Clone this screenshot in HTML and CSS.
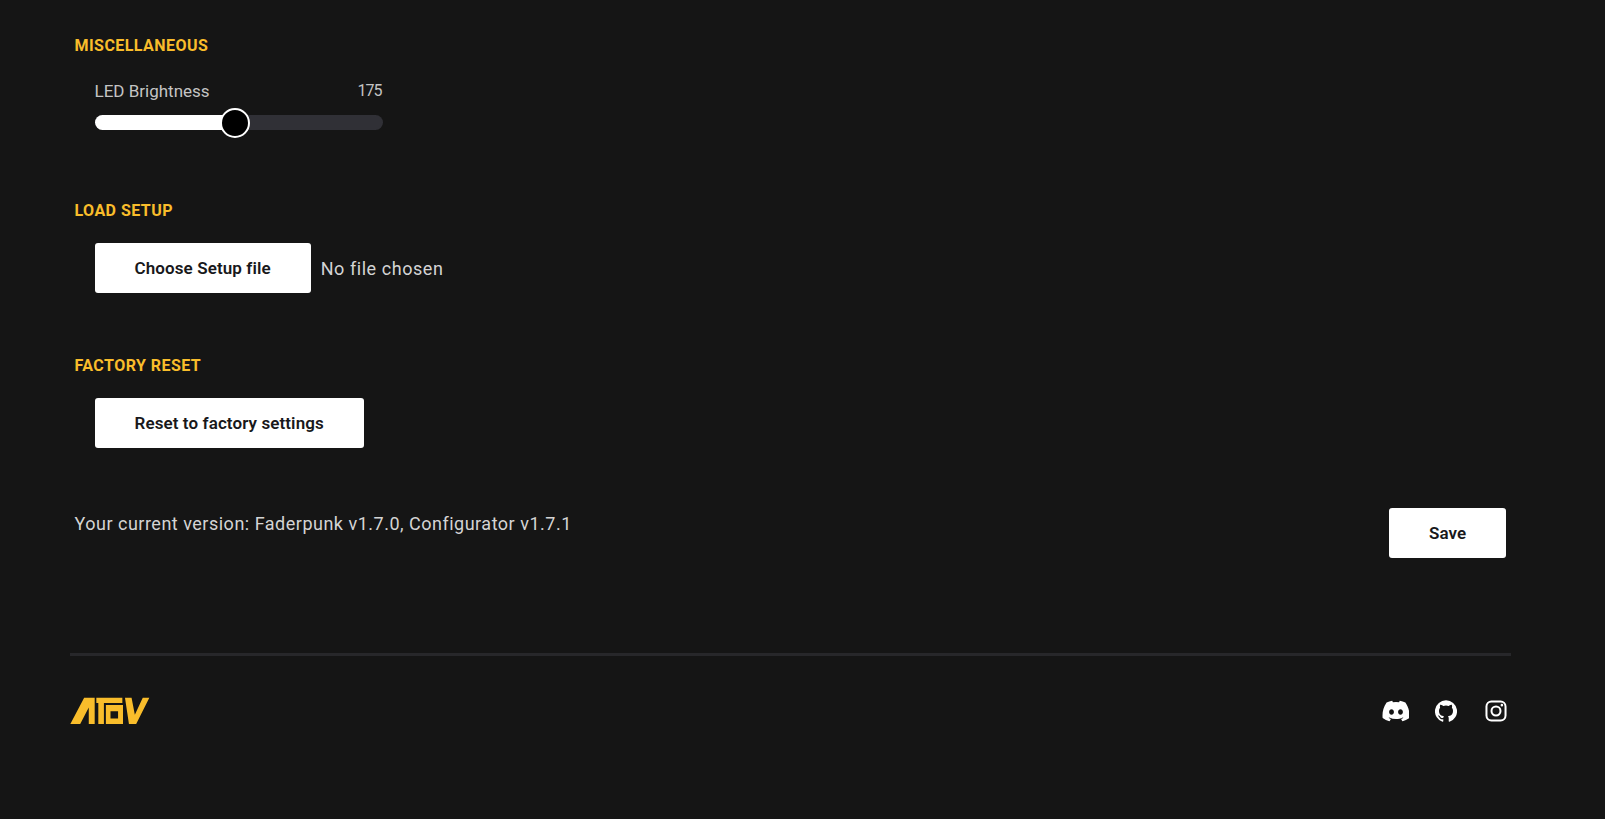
FILE: index.html
```html
<!DOCTYPE html>
<html lang="en">
<head>
<meta charset="utf-8">
<title>Faderpunk Configurator</title>
<link rel="stylesheet" href="styles.css">
</head>
<body>
<div class="page">
  <main class="settings">
    <section class="group group-misc">
      <h2 class="group-title">MISCELLANEOUS</h2>
      <div class="group-body">
        <div class="slider">
          <div class="slider-head"><span>LED Brightness</span><span class="slider-value">175</span></div>
          <div class="slider-track">
            <div class="slider-fill"></div>
            <div class="slider-thumb"></div>
          </div>
        </div>
      </div>
    </section>
    <section class="group group-load">
      <h2 class="group-title">LOAD SETUP</h2>
      <div class="group-body file-row">
        <button class="btn">Choose Setup file</button>
        <span class="file-name">No file chosen</span>
      </div>
    </section>
    <section class="group group-reset">
      <h2 class="group-title">FACTORY RESET</h2>
      <div class="group-body">
        <button class="btn">Reset to factory settings</button>
      </div>
    </section>
    <div class="version-row">
      <p class="version">Your current version: Faderpunk v1.7.0, Configurator v1.7.1</p>
      <button class="btn btn-save">Save</button>
    </div>
  </main>
  <footer class="footer">
    <svg class="logo" viewBox="27 51 243 83" aria-label="ATOV">
      <g fill="#f9bd2b">
        <path d="M28 132 L70 52 H102 V132 H84 V82 L58 132 Z"/>
        <path d="M107 52 H186 V68 H130 V132 H113 V68 H107 Z"/>
        <path fill-rule="evenodd" d="M136 74 H188 V132 H136 Z M150 93 V115 H173 V93 Z"/>
        <path d="M194 52 H214 L224 104 L248 52 H268 L228 132 H206 Z"/>
      </g>
    </svg>
    <div class="socials">
      <svg class="icon icon-discord" viewBox="0 0 24 24"><path fill="#fff" d="M20.32 4.37a19.8 19.8 0 0 0-4.89-1.52.07.07 0 0 0-.08.04c-.21.38-.44.87-.61 1.25a18.3 18.3 0 0 0-5.49 0 12.6 12.6 0 0 0-.62-1.25.08.08 0 0 0-.08-.04 19.7 19.7 0 0 0-4.89 1.52.07.07 0 0 0-.03.03C.53 9.05-.32 13.58.1 18.06c0 .02.01.04.03.06a19.9 19.9 0 0 0 6 3.03.08.08 0 0 0 .08-.03c.46-.63.87-1.29 1.23-1.99a.08.08 0 0 0-.04-.11 13.1 13.1 0 0 1-1.87-.89.08.08 0 0 1-.01-.13c.13-.09.25-.19.37-.29a.07.07 0 0 1 .08-.01c3.93 1.79 8.18 1.79 12.06 0a.07.07 0 0 1 .08.01c.12.1.25.2.37.29a.08.08 0 0 1-.01.13c-.6.35-1.22.64-1.87.89a.08.08 0 0 0-.04.11c.36.7.77 1.36 1.22 1.99a.08.08 0 0 0 .08.03 19.8 19.8 0 0 0 6-3.03.08.08 0 0 0 .03-.06c.5-5.18-.84-9.67-3.55-13.66a.06.06 0 0 0-.03-.03zM8.02 15.33c-1.18 0-2.16-1.08-2.16-2.42 0-1.33.96-2.42 2.16-2.42 1.21 0 2.18 1.1 2.16 2.42 0 1.34-.96 2.42-2.16 2.42zm7.97 0c-1.18 0-2.15-1.08-2.15-2.42 0-1.33.95-2.42 2.15-2.42 1.21 0 2.18 1.1 2.16 2.42 0 1.34-.95 2.42-2.16 2.42z"/></svg>
      <svg class="icon icon-github" viewBox="0 0 24 24"><path fill="#fff" d="M12 .3a12 12 0 0 0-3.79 23.4c.6.11.82-.26.82-.58v-2.03c-3.34.72-4.04-1.61-4.04-1.61-.55-1.39-1.34-1.76-1.34-1.76-1.09-.74.08-.73.08-.73 1.21.09 1.84 1.24 1.84 1.24 1.07 1.84 2.81 1.31 3.5 1 .11-.78.42-1.31.76-1.61-2.67-.3-5.47-1.33-5.47-5.93 0-1.31.47-2.38 1.24-3.22-.14-.3-.54-1.52.1-3.18 0 0 1.01-.32 3.3 1.23a11.5 11.5 0 0 1 6 0c2.28-1.55 3.29-1.23 3.29-1.23.64 1.66.24 2.88.12 3.18a4.65 4.65 0 0 1 1.23 3.22c0 4.61-2.8 5.63-5.48 5.92.42.36.81 1.1.81 2.22v3.29c0 .32.22.7.82.58A12 12 0 0 0 12 .3z"/></svg>
      <svg class="icon icon-instagram" viewBox="0 0 24 24"><path fill="#fff" fill-rule="evenodd" d="M7 .5h10A6.500 6.500 0 0 1 23.500 7v10a6.500 6.500 0 0 1-6.500 6.500H7A6.500 6.500 0 0 1 .5 17V7A6.500 6.500 0 0 1 7 .5zm0 2.200A4.300 4.300 0 0 0 2.700 7v10A4.300 4.300 0 0 0 7 21.300h10a4.300 4.300 0 0 0 4.300-4.300V7A4.300 4.300 0 0 0 17 2.700H7zm5 3.300a6 6 0 1 1 0 12 6 6 0 0 1 0-12zm0 2.200a3.800 3.800 0 1 0 0 7.600 3.800 3.800 0 0 0 0-7.600zM18.400 4.200a1.400 1.400 0 1 1 0 2.800 1.400 1.400 0 0 1 0-2.800z"/></svg>
    </div>
  </footer>
</div>
</body>
</html>
```
FILE: styles.css
```css
* { box-sizing: border-box; }
html, body { margin: 0; height: 100%; }
body {
  background: #151515;
  color: #d4d4d4;
  font-family: Roboto, "Liberation Sans", sans-serif;
  overflow: hidden;
}
.page { padding: 0 94px 0 70px; }
.settings { padding: 36px 5px 0 4.5px; }
.group-title {
  margin: 0;
  font-size: 16px;
  line-height: 20px;
  font-weight: 700;
  letter-spacing: .45px;
  color: #f9bd2b;
}
.group-body { padding-left: 20px; }
.group-misc { height: 165px; }
.group-misc .group-body { padding-top: 25px; }
.group-load { height: 155px; }
.group-load .group-body { padding-top: 22px; }
.group-reset { height: 152px; }
.group-reset .group-body { padding-top: 22px; }
.slider { width: 288px; }
.slider-head {
  display: flex;
  justify-content: space-between;
  font-size: 17px;
  line-height: 20px;
  color: #c4c4c4;
}
.slider-value { font-size: 16px; letter-spacing: -1px; margin-right: 1px; }
.slider-track {
  position: relative;
  height: 15px;
  margin-top: 14px;
  border-radius: 8px;
  background: #303036;
}
.slider-fill {
  height: 100%;
  width: 140px;
  border-radius: 8px 0 0 8px;
  background: #fff;
}
.slider-thumb {
  position: absolute;
  left: 125px;
  top: -7px;
  width: 30px;
  height: 30px;
  border-radius: 50%;
  background: #000;
  border: 2.5px solid #fff;
}
.btn {
  display: block;
  height: 50px;
  padding: 0 40px;
  border: 0;
  border-radius: 3px;
  background: #fff;
  color: #18181b;
  font: 600 17px/20px Roboto, "Liberation Sans", sans-serif;
  letter-spacing: .1px;
}
.file-row { display: flex; align-items: center; gap: 10px; }
.file-name { font-size: 18px; letter-spacing: .55px; color: #d4d4d4; }
.version-row {
  display: flex;
  justify-content: space-between;
  align-items: flex-start;
}
.version { margin: 4px 0 0; font-size: 18px; line-height: 24px; letter-spacing: .5px; color: #d4d4d4; }
.btn-save { width: 117px; }
.footer {
  margin-top: 95px;
  padding-top: 41px;
  border-top: 3px solid #27272a;
  display: flex;
  justify-content: space-between;
  align-items: center;
}
.logo { display: block; width: 80px; height: 28px; }
.socials { display: flex; gap: 22px; align-items: center; padding-right: 1.5px; }
.icon { display: block; width: 28px; height: 28px; }
.icon-discord { padding: .5px; }
.icon-github { padding: 3px; }
.icon-instagram { padding: 3px; }
```
